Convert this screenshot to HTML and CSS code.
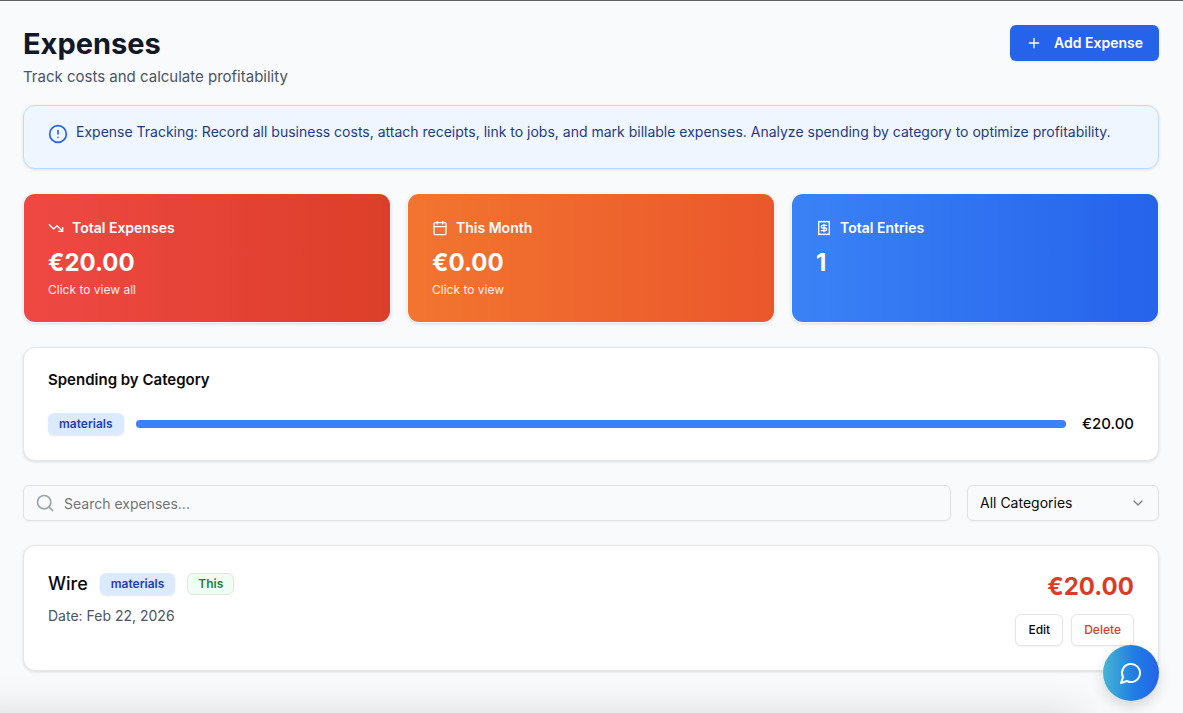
FILE: index.html
```html
<!DOCTYPE html>
<html lang="en">
<head>
<meta charset="utf-8">
<meta name="viewport" content="width=device-width, initial-scale=1">
<title>Expenses</title>
<link rel="stylesheet" href="styles.css">
</head>
<body>
<main class="page">
  <header class="page-header">
    <div>
      <h1 class="page-title">Expenses</h1>
      <p class="page-subtitle">Track costs and calculate profitability</p>
    </div>
    <button class="btn-primary" type="button">
      <svg class="icon icon-sm" viewBox="0 0 24 24" aria-hidden="true"><path d="M5 12h14M12 5v14"/></svg>
      Add Expense
    </button>
  </header>

  <section class="notice">
    <svg class="icon icon-md" viewBox="0 0 24 24" aria-hidden="true"><circle cx="12" cy="12" r="10"/><path d="M12 8v4M12 16h.01"/></svg>
    <p>Expense Tracking: Record all business costs, attach receipts, link to jobs, and mark billable expenses. Analyze spending by category to optimize profitability.</p>
  </section>

  <section class="stats">
    <article class="stat stat-red">
      <h2 class="stat-label">
        <svg class="icon icon-sm" viewBox="0 0 24 24" aria-hidden="true"><path d="M16 17h6v-6"/><path d="m22 17-8.500-8.500-5 5L2 7"/></svg>
        Total Expenses
      </h2>
      <p class="stat-value">€20.00</p>
      <p class="stat-hint">Click to view all</p>
    </article>
    <article class="stat stat-orange">
      <h2 class="stat-label">
        <svg class="icon icon-sm" viewBox="0 0 24 24" aria-hidden="true"><path d="M8 2v4M16 2v4"/><rect width="18" height="18" x="3" y="4" rx="2"/><path d="M3 10h18"/></svg>
        This Month
      </h2>
      <p class="stat-value">€0.00</p>
      <p class="stat-hint">Click to view</p>
    </article>
    <article class="stat stat-blue">
      <h2 class="stat-label">
        <svg class="icon icon-sm" viewBox="0 0 24 24" aria-hidden="true"><path d="M4 2v20l2-1 2 1 2-1 2 1 2-1 2 1 2-1 2 1V2l-2 1-2-1-2 1-2-1-2 1-2-1-2 1Z"/><path d="M16 8h-6a2 2 0 1 0 0 4h4a2 2 0 1 1 0 4H8"/><path d="M12 17.500v-11"/></svg>
        Total Entries
      </h2>
      <p class="stat-value">1</p>
    </article>
  </section>

  <section class="card">
    <h2 class="card-title">Spending by Category</h2>
    <div class="category-row">
      <span class="badge badge-blue">materials</span>
      <div class="bar"><div class="bar-fill" style="width: 100%"></div></div>
      <span class="category-amount">€20.00</span>
    </div>
  </section>

  <form class="filters">
    <div class="search">
      <svg class="icon icon-md" viewBox="0 0 24 24" aria-hidden="true"><circle cx="11" cy="11" r="8"/><path d="m21 21-4.300-4.300"/></svg>
      <input type="search" aria-label="Search expenses" placeholder="Search expenses...">
    </div>
    <div class="select">
      <select aria-label="Category"><option>All Categories</option><option>materials</option></select>
      <svg class="icon icon-sm" viewBox="0 0 24 24" aria-hidden="true"><path d="m6 9 6 6 6-6"/></svg>
    </div>
  </form>

  <article class="card expense">
    <div>
      <div class="expense-heading">
        <h3 class="expense-name">Wire</h3>
        <span class="badge badge-blue">materials</span>
        <span class="badge badge-green">This</span>
      </div>
      <p class="expense-date">Date: Feb 22, 2026</p>
    </div>
    <div class="expense-side">
      <p class="expense-amount">€20.00</p>
      <div class="actions">
        <button class="btn-outline" type="button">Edit</button>
        <button class="btn-outline btn-danger" type="button">Delete</button>
      </div>
    </div>
  </article>
</main>
<div class="bottom-shade"></div>
<button class="chat" type="button" aria-label="Open chat">
  <svg class="icon icon-lg" viewBox="0 0 24 24" aria-hidden="true"><path d="M7.900 20A9 9 0 1 0 4 16.100L2 22Z"/></svg>
</button>
</body>
</html>
```
FILE: styles.css
```css
*, *::before, *::after { box-sizing: border-box; }
h1, h2, h3, p { margin: 0; }
button, input, select { font: inherit; color: inherit; }
button { cursor: pointer; }

body {
  margin: 0;
  min-height: 100vh;
  border-top: 1px solid #626166;
  background: #f9fafc;
  color: #0a0a0a;
  font: 14px/20px Inter, "Liberation Sans", sans-serif;
}

.icon {
  flex: none;
  fill: none;
  stroke: currentColor;
  stroke-width: 2;
  stroke-linecap: round;
  stroke-linejoin: round;
}
.icon-sm { width: 16px; height: 16px; }
.icon-md { width: 20px; height: 20px; }
.icon-lg { width: 24px; height: 24px; }

.page {
  display: flex;
  flex-direction: column;
  gap: 24px;
  padding: 24px 24px 40px 23px;
}

.page-header {
  display: flex;
  justify-content: space-between;
  align-items: flex-start;
  margin-bottom: -8px;
}
.page-title { font-size: 29px; line-height: 38px; font-weight: 700; color: #111827; }
.page-subtitle { margin-top: 2px; font-size: 15px; line-height: 24px; color: #4b5563; }

.btn-primary {
  display: flex;
  align-items: center;
  gap: 12px;
  height: 36px;
  padding: 0 16px;
  border: 0;
  border-radius: 6px;
  background: #2563eb;
  box-shadow: 0 1px 2px rgba(0, 0, 0, .08);
  color: #fff;
  font-weight: 600;
}

.notice {
  display: flex;
  gap: 8px;
  min-height: 64px;
  padding: 16px 24px;
  border: 1px solid #bfdbfe;
  border-radius: 12px;
  background: #eff6ff;
  box-shadow: 0 1px 3px rgba(0, 0, 0, .1);
  color: #1e3a8a;
}
.notice .icon { margin-top: 2px; color: #2563eb; }

.stats { display: grid; grid-template-columns: repeat(3, 1fr); gap: 16px; }
.stat {
  padding: 24px;
  border: 1px solid transparent;
  border-radius: 12px;
  background-clip: padding-box;
  box-shadow: 0 1px 3px rgba(0, 0, 0, .12);
  color: #fff;
}
.stat-red { background-image: linear-gradient(to right, #ef4844, #dc3f29); }
.stat-orange { background-image: linear-gradient(to right, #f2752f, #eb572c); }
.stat-blue { background-image: linear-gradient(to right, #3b82f6, #2563eb); }
.stat-label { display: flex; align-items: center; gap: 8px; font-size: 14px; font-weight: 600; }
.stat-value { margin-top: 8px; font-size: 24px; line-height: 34px; font-weight: 700; }
.stat-hint { margin-top: 2px; font-size: 12px; line-height: 16px; opacity: .9; }

.card {
  padding: 24px;
  border: 1px solid #e5e5e5;
  border-radius: 12px;
  background: #fff;
  box-shadow: 0 1px 3px rgba(0, 0, 0, .12);
}
.card-title { font-size: 15px; line-height: 16px; font-weight: 600; }
.category-row { display: flex; align-items: center; margin-top: 24px; }
.bar { flex: 1; height: 8px; margin: 0 16px 0 12px; border-radius: 4px; background: #e5e7eb; }
.bar-fill { height: 100%; border-radius: 4px; background: #3b82f6; }
.category-amount { font-size: 15px; line-height: 24px; font-weight: 500; }

.badge {
  padding: 2px 10px;
  border: 1px solid transparent;
  border-radius: 6px;
  font-size: 12px;
  line-height: 16px;
  font-weight: 600;
}
.badge-blue { background: #dbeafe; box-shadow: 0 1px 2px rgba(0, 0, 0, .1); color: #1e40af; }
.badge-green { border-color: #dfe7e3; background: #f0fdf4; color: #23803c; }

.filters { display: flex; gap: 16px; }
.search { position: relative; flex: 1; }
.search .icon { position: absolute; top: 8px; left: 12px; color: #9ca3af; }
.search input,
.select select {
  display: block;
  width: 100%;
  height: 36px;
  padding: 0 12px;
  border: 1px solid #e2e3e6;
  border-radius: 6px;
  background: transparent;
  box-shadow: 0 1px 2px rgba(0, 0, 0, .05);
  appearance: none;
}
.search input { padding-left: 40px; }
.search input::placeholder { color: #737373; }
.select { position: relative; width: 192px; }
.select .icon { position: absolute; top: 10px; right: 13px; color: #808186; pointer-events: none; }

.expense { display: flex; justify-content: space-between; }
.expense-heading { display: flex; align-items: center; gap: 12px; }
.expense-name { font-size: 18px; line-height: 28px; font-weight: 500; }
.expense-date { margin-top: 8px; color: #4b5563; }
.expense-side { display: flex; flex-direction: column; align-items: flex-end; gap: 10px; }
.expense-amount { font-size: 24px; line-height: 34px; font-weight: 700; color: #dc3c26; }
.actions { display: flex; gap: 8px; }
.btn-outline {
  height: 32px;
  padding: 0 12px;
  border: 1px solid #e5e5e5;
  border-radius: 6px;
  background: #fff;
  box-shadow: 0 1px 2px rgba(0, 0, 0, .05);
  font-size: 12px;
  font-weight: 500;
}
.btn-danger { color: #dc3c26; }

.bottom-shade {
  position: fixed;
  right: 100px;
  bottom: -40px;
  left: -40px;
  height: 40px;
  box-shadow: 0 0 40px rgba(0, 0, 0, .13);
  pointer-events: none;
}
.chat {
  position: fixed;
  right: 24px;
  bottom: 12px;
  display: grid;
  place-items: center;
  width: 56px;
  height: 56px;
  padding: 0;
  border: 0;
  border-radius: 50%;
  background: linear-gradient(to right, #47b5d3, #1f7ee4 55%, #2563eb);
  box-shadow: 0 6px 14px rgba(0, 0, 0, .14);
  color: #fff;
}
```
